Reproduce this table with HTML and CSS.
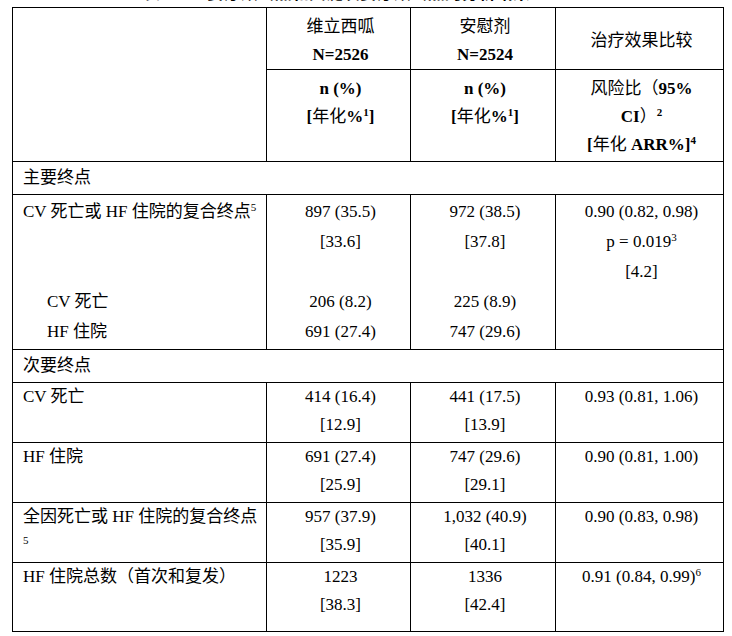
FILE: index.html
```html
<!DOCTYPE html>
<html lang="zh-CN">
<head>
<meta charset="utf-8">
<title>主要和次要终点分析结果</title>
<link rel="stylesheet" href="styles.css">
</head>
<body>
<div class="page">
  <div class="title">表 1　主要疗效终点和关键次要疗效终点的分析结果</div>
  <table class="results">
    <colgroup>
      <col class="c-label">
      <col class="c-arm">
      <col class="c-arm2">
      <col class="c-cmp">
    </colgroup>
    <thead>
      <tr class="head-top">
        <th rowspan="2"></th>
        <th>维立西呱<br><b>N=2526</b></th>
        <th>安慰剂<br><b>N=2524</b></th>
        <th class="mid">治疗效果比较</th>
      </tr>
      <tr class="head-sub">
        <th><b>n (%)</b><br><b>[</b>年化<b>%<sup>1</sup>]</b></th>
        <th><b>n (%)</b><br><b>[</b>年化<b>%<sup>1</sup>]</b></th>
        <th>风险比（<b>95%</b><br><b>CI</b>）<sup class="b">2</sup><br><b>[</b>年化 <b>ARR%]<sup>4</sup></b></th>
      </tr>
    </thead>
    <tbody>
      <tr class="section"><td colspan="4">主要终点</td></tr>
      <tr class="composite">
        <td class="label">CV 死亡或 HF 住院的复合终点<sup>5</sup><br>&nbsp;<br>&nbsp;<br><span class="sub">CV 死亡</span><br><span class="sub">HF 住院</span></td>
        <td>897 (35.5)<br>[33.6]<br>&nbsp;<br>206 (8.2)<br>691 (27.4)</td>
        <td>972 (38.5)<br>[37.8]<br>&nbsp;<br>225 (8.9)<br>747 (29.6)</td>
        <td>0.90 (0.82, 0.98)<br>p = 0.019<sup>3</sup><br>[4.2]</td>
      </tr>
      <tr class="section"><td colspan="4">次要终点</td></tr>
      <tr class="pair">
        <td class="label">CV 死亡</td>
        <td>414 (16.4)<br>[12.9]</td>
        <td>441 (17.5)<br>[13.9]</td>
        <td>0.93 (0.81, 1.06)</td>
      </tr>
      <tr class="pair">
        <td class="label">HF 住院</td>
        <td>691 (27.4)<br>[25.9]</td>
        <td>747 (29.6)<br>[29.1]</td>
        <td>0.90 (0.81, 1.00)</td>
      </tr>
      <tr class="pair">
        <td class="label">全因死亡或 HF 住院的复合终点<br><sup>5</sup></td>
        <td>957 (37.9)<br>[35.9]</td>
        <td>1,032 (40.9)<br>[40.1]</td>
        <td>0.90 (0.83, 0.98)</td>
      </tr>
      <tr class="pair last">
        <td class="label">HF 住院总数（首次和复发）</td>
        <td>1223<br>[38.3]</td>
        <td>1336<br>[42.4]</td>
        <td>0.91 (0.84, 0.99)<sup>6</sup></td>
      </tr>
    </tbody>
  </table>
</div>
</body>
</html>
```

FILE: styles.css
```css
* {
  box-sizing: border-box;
}

html, body {
  margin: 0;
  background: #ffffff;
}

body {
  color: #000000;
  font-family: "Liberation Serif", "Noto Sans CJK SC", serif;
  font-size: 17px;
}

.page {
  padding: 0 8px 0 12px;
}

.title {
  margin: -16px 0 3px;
  padding-left: 131px;
  line-height: 20px;
  font-weight: bold;
  white-space: nowrap;
}

.results {
  border-collapse: collapse;
  table-layout: fixed;
  width: 711px;
}

.c-label { width: 254px; }
.c-arm { width: 144px; }
.c-arm2 { width: 145px; }
.c-cmp { width: 168px; }

.results th,
.results td {
  border: 1px solid #000000;
  padding: 0 6px 3px 10px;
  line-height: 28px;
  vertical-align: top;
  font-weight: normal;
  text-align: center;
}

.results b {
  font-weight: bold;
}

.results sup {
  font-size: 11px;
  line-height: 0;
  vertical-align: 6px;
}

.results sup.b {
  font-weight: bold;
}

.head-top th {
  padding-top: 5px;
  padding-bottom: 0;
}

.head-top th.mid {
  vertical-align: middle;
}

.head-sub th {
  padding-top: 5px;
  padding-bottom: 2px;
}

.section td {
  text-align: left;
  padding-top: 2px;
  padding-bottom: 3px;
  line-height: 27px;
}

.composite td {
  line-height: 30px;
  padding-top: 2px;
  padding-bottom: 2px;
}

.results td.label {
  text-align: left;
}

.sub {
  margin-left: 24px;
}

.pair td {
  padding-top: 0;
  padding-bottom: 3px;
}

.pair.last td {
  padding-bottom: 12px;
}
```
